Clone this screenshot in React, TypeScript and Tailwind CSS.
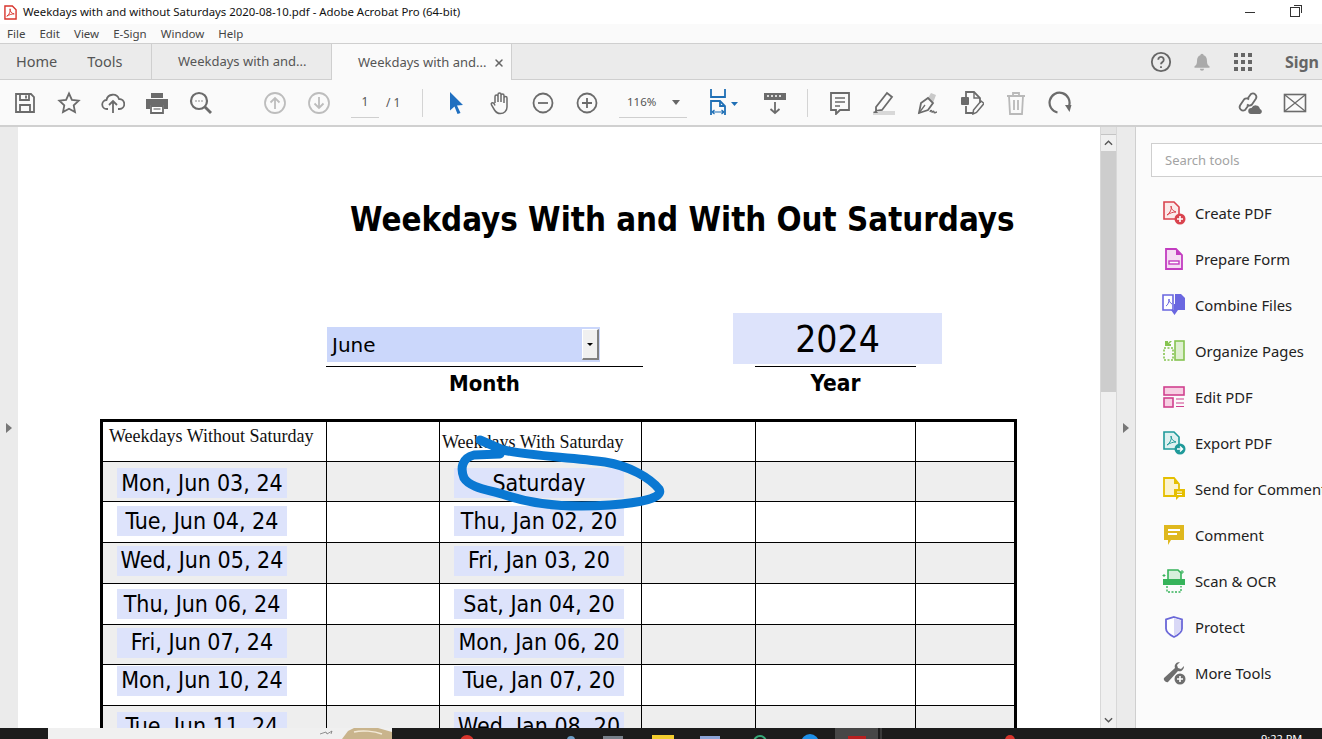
import React from 'react';
import { X } from 'lucide-react';

const UI = "font-['Noto_Sans',sans-serif]";
const DOC = "font-['DejaVu_Sans_Condensed','DejaVu_Sans',sans-serif]";

const ROWS = [
  { a: 'Mon, Jun 03, 24', b: 'Saturday', gray: true, h: 'h-[40px]', nudge: 'pt-[3px]' },
  { a: 'Tue, Jun 04, 24', b: 'Thu, Jan 02, 20', gray: false, h: 'h-[41px]', nudge: 'pb-[2px]' },
  { a: 'Wed, Jun 05, 24', b: 'Fri, Jan 03, 20', gray: true, h: 'h-[41px]', nudge: 'pb-[5px]' },
  { a: 'Thu, Jun 06, 24', b: 'Sat, Jan 04, 20', gray: false, h: 'h-[41px]', nudge: '' },
  { a: 'Fri, Jun 07, 24', b: 'Mon, Jan 06, 20', gray: true, h: 'h-[40px]', nudge: 'pb-[4px]' },
  { a: 'Mon, Jun 10, 24', b: 'Tue, Jan 07, 20', gray: false, h: 'h-[41px]', nudge: 'pb-[9px]' },
  { a: 'Tue, Jun 11, 24', b: 'Wed, Jan 08, 20', gray: true, h: 'h-[40px]', nudge: 'pt-[2px]' },
];

const TOOLS: { label: string; icon: React.ReactNode }[] = [
  {
    label: 'Create PDF',
    icon: (
      <svg viewBox="0 0 24 24" className="w-6 h-6">
        <path d="M2 1h10l5 5v12H2z" fill="#fbeaea" stroke="#d9434e" strokeWidth="1.600" />
        <path d="M5 14c3-2 5-6 4-9 0 3 2 5 5 6-3 0-6 1-9 3z" fill="none" stroke="#d9434e" strokeWidth="1" />
        <circle cx="18" cy="18" r="5.500" fill="#d9434e" />
        <path d="M15 18h6M18 15v6" stroke="#fff" strokeWidth="1.600" />
      </svg>
    ),
  },
  {
    label: 'Prepare Form',
    icon: (
      <svg viewBox="0 0 24 24" className="w-6 h-6">
        <path d="M4 2h10l6 6v14H4z" fill="#f5dcf3" stroke="#c23cc0" strokeWidth="1.800" />
        <path d="M14 2v6h6z" fill="#c23cc0" />
        <rect x="7" y="14" width="10" height="3" fill="#fff" stroke="#c23cc0" strokeWidth="1.400" />
      </svg>
    ),
  },
  {
    label: 'Combine Files',
    icon: (
      <svg viewBox="0 0 24 24" className="w-6 h-6">
        <path d="M1 2h10v15H1z" fill="#fff" stroke="#6a67e0" strokeWidth="1.600" />
        <path d="M13 1h6l4 4v12H13z" fill="#6a67e0" />
        <path d="M4 13c2-1 3-4 3-7 0 2 1 4 3 5" fill="none" stroke="#6a67e0" strokeWidth="1" />
        <path d="M9 17h3v-6h1v6h3l-3.500 5z" fill="#6a67e0" />
      </svg>
    ),
  },
  {
    label: 'Organize Pages',
    icon: (
      <svg viewBox="0 0 24 24" className="w-6 h-6">
        <rect x="13" y="2" width="9" height="19" fill="#dff0d0" stroke="#85c450" strokeWidth="1.600" />
        <rect x="2" y="9" width="9" height="12" fill="none" stroke="#85c450" strokeWidth="1.600" strokeDasharray="2 1.500" />
        <path d="M3 2v5h6V5H7l3-3H8L6 4V2z" fill="#85c450" />
      </svg>
    ),
  },
  {
    label: 'Edit PDF',
    icon: (
      <svg viewBox="0 0 24 24" className="w-6 h-6">
        <rect x="2" y="2" width="20" height="8" fill="#f7cfe3" stroke="#d0408e" strokeWidth="1.600" />
        <rect x="2" y="13" width="9" height="9" fill="#f7cfe3" stroke="#d0408e" strokeWidth="1.600" />
        <path d="M14 14h8M14 18h8M14 21.500h8" stroke="#d0408e" strokeWidth="1.200" />
      </svg>
    ),
  },
  {
    label: 'Export PDF',
    icon: (
      <svg viewBox="0 0 24 24" className="w-6 h-6">
        <path d="M2 1h10l5 5v12H2z" fill="#dff1f0" stroke="#1f9a9a" strokeWidth="1.600" />
        <path d="M5 14c3-2 5-6 4-9 0 3 2 5 5 6-3 0-6 1-9 3z" fill="none" stroke="#1f9a9a" strokeWidth="1" />
        <circle cx="18" cy="18" r="5.500" fill="#1f9a9a" />
        <path d="M15 18h5M18 15.500l2.500 2.500-2.500 2.500" stroke="#fff" strokeWidth="1.400" fill="none" />
      </svg>
    ),
  },
  {
    label: 'Send for Comments',
    icon: (
      <svg viewBox="0 0 24 24" className="w-6 h-6">
        <path d="M2 1h10l5 6v12H2z" fill="#fbf3cf" stroke="#e5bf00" strokeWidth="1.800" />
        <path d="M12 1v6h5z" fill="#e5bf00" />
        <path d="M12 12h11v8h-6l-3 3v-3h-2z" fill="#e5bf00" />
        <path d="M15 15h5M15 17.500h5" stroke="#fff" strokeWidth="1" />
      </svg>
    ),
  },
  {
    label: 'Comment',
    icon: (
      <svg viewBox="0 0 24 24" className="w-6 h-6">
        <path d="M2 2h20v15H9l-3 5v-5H2z" fill="#dfb81e" />
        <path d="M6 7h12M6 11h9" stroke="#fff" strokeWidth="1.800" />
      </svg>
    ),
  },
  {
    label: 'Scan & OCR',
    icon: (
      <svg viewBox="0 0 24 24" className="w-6 h-6">
        <path d="M6 1h10l3 3v7H6z" fill="#d5f0dc" stroke="#36b35a" strokeWidth="1.600" />
        <path d="M1 10h22v6H1z" fill="#36b35a" />
        <path d="M5 17v6h14v-6" fill="none" stroke="#36b35a" strokeWidth="1.400" strokeDasharray="2 1.500" />
        <path d="M20 1v4M18 3h4M2 5v3M.5 6.500h3" stroke="#36b35a" strokeWidth="1" />
      </svg>
    ),
  },
  {
    label: 'Protect',
    icon: (
      <svg viewBox="0 0 24 24" className="w-6 h-6">
        <path d="M12 2l8 2.500v9c0 4-4 6.500-8 8.500-4-2-8-4.500-8-8.500v-9z" fill="#fff" stroke="#6a67d8" strokeWidth="1.800" />
        <path d="M12 3v18c3.500-2 7-4 7-7.500v-8z" fill="#d9d8f6" />
      </svg>
    ),
  },
  {
    label: 'More Tools',
    icon: (
      <svg viewBox="0 0 24 24" className="w-6 h-6">
        <path d="M2 17L13 7c-1-3 1-6 5-6l-3 3 1 3 3 1 3-3c0 4-3 6-6 5L6 21c-2 1-5-2-4-4z" fill="#6e6e6e" />
        <circle cx="18" cy="18" r="5.500" fill="#6e6e6e" />
        <path d="M15 18h6M18 15v6" stroke="#fff" strokeWidth="1.600" />
      </svg>
    ),
  },
];

function Slot({ w = 'w-[44px]', children }: { w?: string; children: React.ReactNode }) {
  return <div className={`${w} h-full flex items-center justify-center shrink-0`}>{children}</div>;
}

function Ico({ children, className = 'text-[#6b6b6b]' }: { children: React.ReactNode; className?: string }) {
  return (
    <svg viewBox="0 0 24 24" className={`w-6 h-6 ${className}`} fill="none" stroke="currentColor" strokeWidth="1.800">
      {children}
    </svg>
  );
}

function Field({ text }: { text: string }) {
  return (
    <div className={`${DOC} w-[170px] h-[30px] bg-[#dde3fb] flex items-center justify-center text-[23px] text-black whitespace-nowrap`}>
      {text}
    </div>
  );
}

function Toolbar() {
  return (
    <div className="h-[47px] bg-[#fafafa] border-b-2 border-[#d0d0d0] flex items-center pl-[3px] shrink-0">
      <Slot>
        <Ico>
          <path d="M3 3h15l3 3v15H3z" />
          <path d="M7 3v6h9V3M7 21v-7h10v7M13 4.500v3" />
        </Ico>
      </Slot>
      <Slot>
        <Ico>
          <path d="M12 2.500l2.900 6.300 6.800.8-5 4.700 1.300 6.800-6-3.400-6 3.400 1.300-6.800-5-4.700 6.800-.8z" />
        </Ico>
      </Slot>
      <Slot>
        <Ico>
          <path d="M7 18H6a4.500 4.500 0 0 1-.5-9A6.500 6.500 0 0 1 18 8a5 5 0 0 1 .5 10H17" />
          <path d="M12 22v-11M8 14l4-4 4 4" />
        </Ico>
      </Slot>
      <Slot>
        <svg viewBox="0 0 24 24" className="w-6 h-6">
          <path d="M6 2h12v5H6z" fill="#6b6b6b" />
          <path d="M1 8h22v10h-4v-4H5v4H1z" fill="#6b6b6b" />
          <path d="M6 15h12v7H6z" fill="#fff" stroke="#6b6b6b" strokeWidth="1.800" />
          <path d="M8.500 18h7" stroke="#6b6b6b" strokeWidth="1.200" />
        </svg>
      </Slot>
      <Slot>
        <Ico>
          <circle cx="10" cy="10" r="8" strokeWidth="2.200" />
          <path d="M16 16l6 6" strokeWidth="2.800" />
          <path d="M6.500 10h1M9.500 10h1M12.500 10h1" strokeWidth="1.600" />
        </Ico>
      </Slot>
      <div className="w-[30px] shrink-0" />
      <Slot>
        <Ico className="text-[#bdbdbd]">
          <circle cx="12" cy="12" r="10" />
          <path d="M12 18V7M7.500 11.500L12 7l4.500 4.500" />
        </Ico>
      </Slot>
      <Slot>
        <Ico className="text-[#bdbdbd]">
          <circle cx="12" cy="12" r="10" />
          <path d="M12 6v11M7.500 12.500L12 17l4.500-4.500" />
        </Ico>
      </Slot>
      <div className="w-[10px] shrink-0" />
      <div className={`${UI} w-[28px] h-[30px] border-b border-[#cfcfcf] flex items-center justify-center text-[12px] text-[#555] shrink-0`}>1</div>
      <div className={`${UI} ml-[7px] w-[15px] text-[12px] text-[#555] shrink-0 whitespace-nowrap`}>/ 1</div>
      <div className="ml-[21px] w-px h-[28px] bg-[#d4d4d4] shrink-0" />
      <div className="w-[11px] shrink-0" />
      <Slot>
        <svg viewBox="0 0 24 24" className="w-6 h-6">
          <path d="M6 1l13 13-6 .5 3.500 7.500-3 1-3-7.500-4.500 4z" fill="#1f6fc0" />
        </svg>
      </Slot>
      <Slot w="w-[43px]">
        <Ico>
          <path d="M7 12V5.500a1.500 1.500 0 0 1 3 0V11M10 10V3.500a1.500 1.500 0 0 1 3 0V11M13 11V4.500a1.500 1.500 0 0 1 3 0V12M16 12V7a1.500 1.500 0 0 1 3 0v9c0 4-3 6.500-6.500 6.500-3 0-4.500-1-6-3.500l-3-5c-1-2 1-3 2.500-1.500L7 14.500" strokeWidth="1.500" />
        </Ico>
      </Slot>
      <Slot>
        <Ico>
          <circle cx="12" cy="12" r="9.500" />
          <path d="M7 12h10" />
        </Ico>
      </Slot>
      <Slot>
        <Ico>
          <circle cx="12" cy="12" r="9.500" />
          <path d="M7 12h10M12 7v10" />
        </Ico>
      </Slot>
      <div className="w-[10px] shrink-0" />
      <div className={`${UI} w-[68px] h-[30px] border-b border-[#cfcfcf] flex items-center justify-between pl-[8px] pr-[7px] text-[11.500px] text-[#555] shrink-0`}>
        <span>116%</span>
        <span className="w-0 h-0 border-x-[4px] border-x-transparent border-t-[5px] border-t-[#666]" />
      </div>
      <div className="w-[16px] shrink-0" />
      <Slot w="w-[40px]">
        <svg viewBox="0 0 30 30" className="w-[30px] h-[30px]" fill="none" stroke="#1f6fb5" strokeWidth="1.800">
          <path d="M3 1v8h14V1" />
          <path d="M3 27V13h9l5 5v9" />
          <path d="M12 13v5h5" />
          <path d="M4 24h12M4 24l2.500-2M4 24l2.500 2M16 24l-2.500-2M16 24l-2.500 2" strokeWidth="1.200" />
          <path d="M23 14h7l-3.500 4z" fill="#1f6fb5" stroke="none" />
        </svg>
      </Slot>
      <div className="w-[10px] shrink-0" />
      <Slot w="w-[44px]">
        <svg viewBox="0 0 24 24" className="w-6 h-6" fill="none">
          <path d="M1 2h22v7H1z" fill="#6b6b6b" />
          <path d="M4 5h2M8 5h2M12 5h2M16 5h2" stroke="#fff" strokeWidth="1.600" />
          <path d="M12 11v11M7.500 18l4.500 4 4.500-4" stroke="#6b6b6b" strokeWidth="1.800" />
        </svg>
      </Slot>
      <div className="ml-[10px] w-px h-[28px] bg-[#d4d4d4] shrink-0" />
      <div className="w-[10px] shrink-0" />
      <Slot>
        <Ico>
          <path d="M3 2h18v17h-9l-4 4v-4H3z" />
          <path d="M7 7h10M7 11h10M7 15h5" strokeWidth="1.300" />
        </Ico>
      </Slot>
      <Slot>
        <svg viewBox="0 0 24 24" className="w-6 h-6" fill="none">
          <path d="M4 16L15 2l5 4-10 13-6 1z" stroke="#6b6b6b" strokeWidth="1.800" />
          <path d="M1 20h22v4H1z" fill="#d8d8d8" />
          <path d="M4 19l-3 3h5z" fill="#6b6b6b" />
        </svg>
      </Slot>
      <Slot>
        <svg viewBox="0 0 24 24" className="w-6 h-6" fill="none">
          <path d="M12 7l3-5 5 2-3 8z" fill="#c9c9c9" />
          <path d="M3 22l2-10 7-5 5 5-5 7z" stroke="#6b6b6b" strokeWidth="1.800" />
          <path d="M3 22l6-8" stroke="#6b6b6b" strokeWidth="1.300" />
          <path d="M14 21c1-3 2-1 2 0s2-2 2 0 2 0 3 0" stroke="#6b6b6b" strokeWidth="1.400" />
        </svg>
      </Slot>
      <Slot>
        <svg viewBox="0 0 24 24" className="w-6 h-6" fill="none">
          <path d="M6 6V1h8l6 6v5M6 15v7h7" stroke="#6b6b6b" strokeWidth="1.800" />
          <path d="M14 1v6h6" stroke="#6b6b6b" strokeWidth="1.400" />
          <rect x="1" y="6" width="8" height="8" rx="1" fill="#6b6b6b" />
          <path d="M13 23l.5-4L21 10l3 2.500-7.500 9z" stroke="#6b6b6b" strokeWidth="1.500" />
        </svg>
      </Slot>
      <Slot>
        <Ico className="text-[#b9b9b9]">
          <path d="M3 5h18M9 5V2h6v3M5 5l1 18h12l1-18M10 9v10M14 9v10" />
        </Ico>
      </Slot>
      <Slot>
        <Ico>
          <path d="M9.500 21.500A10 10 0 1 1 21 15" strokeWidth="2.200" />
          <path d="M17 14h6.500l-2 7z" fill="currentColor" stroke="none" />
        </Ico>
      </Slot>
      <div className="flex-1" />
      <Slot>
        <svg viewBox="0 0 26 26" className="w-[26px] h-[26px]" fill="none">
          <path d="M11 16l-3 4a3.500 3.500 0 0 1-5-4.500l4-6a3.500 3.500 0 0 1 5 0M11 8l3-4a3.500 3.500 0 0 1 5 4.500l-4 6a3.500 3.500 0 0 1-5 0" stroke="#6b6b6b" strokeWidth="1.800" />
          <path d="M14 24a3 3 0 0 1 .5-6 4.500 4.500 0 0 1 8.500 1 2.600 2.600 0 0 1 0 5z" fill="#6b6b6b" />
        </svg>
      </Slot>
      <Slot w="w-[46px]">
        <Ico>
          <rect x="1.500" y="3.500" width="21" height="17" strokeWidth="1.600" />
          <path d="M2 4l20 16M22 4L2 20" strokeWidth="1.300" />
        </Ico>
      </Slot>
      <div className="w-[4px] shrink-0" />
    </div>
  );
}

function DataTable() {
  return (
    <div className="ml-[82px] w-[917px] border-x-[3px] border-t-[3px] border-black">
      <div className="flex h-[40px] border-b border-black font-['Liberation_Serif',serif] text-[18px] text-[#111]">
        <div className="w-[224px] border-r border-black pl-[6px] pt-[1px] whitespace-nowrap">Weekdays Without Saturday</div>
        <div className="w-[113px] border-r border-black" />
        <div className="w-[202px] border-r border-black pl-[2px] pt-[7px] whitespace-nowrap">Weekdays With Saturday</div>
        <div className="w-[114px] border-r border-black" />
        <div className="w-[160px] border-r border-black" />
        <div className="flex-1" />
      </div>
      {ROWS.map((r, i) => (
        <div key={i} className={`flex ${r.h} border-b border-black ${r.gray ? 'bg-[#eeeeee]' : 'bg-white'}`}>
          <div className={`w-[224px] border-r border-black pl-[14px] flex items-center ${r.nudge}`}>
            <Field text={r.a} />
          </div>
          <div className="w-[113px] border-r border-black" />
          <div className={`w-[202px] border-r border-black pl-[14px] flex items-center ${r.nudge}`}>
            <Field text={r.b} />
          </div>
          <div className="w-[114px] border-r border-black" />
          <div className="w-[160px] border-r border-black" />
          <div className="flex-1" />
        </div>
      ))}
    </div>
  );
}

function PdfPage() {
  return (
    <div className="relative w-[1082px] shrink-0 bg-white overflow-hidden">
      <h1 className={`${DOC} mt-[72px] ml-[332px] h-[44px] flex items-center text-[32.800px] font-bold text-black whitespace-nowrap`}>
        Weekdays With and With Out Saturdays
      </h1>
      <div className="flex mt-[70px] ml-[308px]">
        <div className="w-[317px] mt-[14px]">
          <div className="h-[40px] border-b border-black pb-[4px]">
            <div className="ml-px w-[273px] h-[35px] bg-[#cbd7fb] flex items-center justify-between pl-[5px] pr-[1px]">
              <span className="font-['DejaVu_Sans',sans-serif] text-[20px] text-black">June</span>
              <span className="w-[17px] h-[31px] bg-[#f0f0f0] border-r-2 border-b-2 border-[#808080] border-l border-t border-l-white border-t-white flex items-center justify-center">
                <span className="w-0 h-0 border-x-[3px] border-x-transparent border-t-[3px] border-t-black" />
              </span>
            </div>
          </div>
          <div className={`${DOC} text-center text-[22px] font-bold text-black h-[33px] leading-[33px]`}>Month</div>
        </div>
        <div className="w-[209px] ml-[90px]">
          <div className={`${DOC} h-[51px] pt-[3px] bg-[#dde3fb] flex items-center justify-center text-[37px] text-black`}>2024</div>
          <div className="mt-[2px] ml-[22px] w-[161px] h-px bg-black" />
          <div className={`${DOC} ml-[22px] w-[161px] text-center text-[22.500px] font-bold text-black h-[33px] leading-[33px]`}>Year</div>
        </div>
      </div>
      <div className="mt-[19px]">
        <DataTable />
      </div>
      {/* ink scribble over the table */}
      <svg className="absolute left-0 top-0 w-full h-full pointer-events-none" viewBox="0 0 1082 601" fill="none">
        <path
          d="M462 313 L485 323 C512 329 552 330 587 335 C612 339 632 351 641 362 C646 371 622 376 592 378 C552 381 517 378 487 368 C472 363 452 361 446 351 C442 341 444 331 456 328 L482 327"
          stroke="#0a78d2"
          strokeWidth="9"
          strokeLinecap="round"
          strokeLinejoin="round"
        />
      </svg>
    </div>
  );
}

function Scrollbar() {
  return (
    <div className="w-[17px] shrink-0 bg-[#f0f0f0] border-x border-[#d8d8d8] flex flex-col items-center">
      <div className="w-full h-[8px] bg-[#e4e4e4] border-b border-[#c4c4c4]" />
      <div className="h-[16px] flex items-center justify-center text-[#555]">
        <svg viewBox="0 0 10 6" className="w-[9px] h-[6px]" fill="none" stroke="currentColor" strokeWidth="1.500">
          <path d="M1 5l4-4 4 4" />
        </svg>
      </div>
      <div className="w-full h-[241px] bg-[#cdcdcd]" />
      <div className="flex-1" />
      <div className="h-[17px] flex items-center justify-center text-[#555]">
        <svg viewBox="0 0 10 6" className="w-[9px] h-[6px]" fill="none" stroke="currentColor" strokeWidth="1.500">
          <path d="M1 1l4 4 4-4" />
        </svg>
      </div>
    </div>
  );
}

function Gutter({ w }: { w: string }) {
  return (
    <div className={`${w} shrink-0 bg-[#ebebeb] flex items-center justify-center`}>
      <span className="w-0 h-0 border-y-[5px] border-y-transparent border-l-[6px] border-l-[#777]" />
    </div>
  );
}

function ToolsPanel() {
  return (
    <div className={`${UI} flex-1 min-w-0 border-l border-[#cfcfcf] bg-[#fbfbfb] overflow-hidden pt-[16px] pl-[15px]`}>
      <div className="w-[200px] h-[34px] bg-white border border-[#cfcfcf] flex items-center pl-[13px] pt-[1px] text-[13px] text-[#a3a3a3]">Search tools</div>
      <div className="mt-[13px] pl-[11px] flex flex-col">
        {TOOLS.map(t => (
          <div key={t.label} className="w-[200px] h-[46px] flex items-center gap-[9px] whitespace-nowrap text-[14.800px] text-[#222]">
            <span className="w-6 h-6 shrink-0">{t.icon}</span>
            <span>{t.label}</span>
          </div>
        ))}
      </div>
    </div>
  );
}

function Taskbar() {
  return (
    <div className="h-[11px] bg-[#1c1c1c] flex shrink-0 overflow-hidden relative">
      <div className="ml-[48px] w-[344px] bg-[#f0f0f0] flex justify-end">
        <svg viewBox="0 0 72 11" className="w-[72px] h-[11px]">
          <path d="M0 6l6-2 1 2 5-3-1 3" fill="none" stroke="#777" strokeWidth=".8" />
          <path d="M22 11l6-8 6-3h24l14 4v7z" fill="#c9b48c" />
          <path d="M34 4c8-2 20-1 28 2" fill="none" stroke="#f3ead8" strokeWidth="1.500" />
        </svg>
      </div>
      <div className="ml-[68px] mt-[7px] w-[14px] h-[14px] rounded-full bg-[#d8342c]" />
      <div className="ml-[93px] mt-[8px] w-[8px] h-[8px] rounded-full bg-[#6b9cc4]" />
      <div className="ml-[28px] mt-[8px] w-[20px] h-[8px] bg-[#77808a]" />
      <div className="ml-[29px] mt-[7px] w-[22px] h-[8px] bg-[#f2cc2e]" />
      <div className="ml-[26px] mt-[8px] w-[20px] h-[8px] bg-[#8ca4d8]" />
      <div className="ml-[33px] mt-[7px] w-[14px] h-[14px] rounded-full border-2 border-[#35a878]" />
      <div className="ml-[34px] mt-[6px] w-[18px] h-[18px] rounded-full bg-[#1e8fe8]" />
      <div className="ml-[16px] w-[43px] bg-[#474747] flex justify-center pt-[8px]">
        <div className="w-[18px] h-[8px] bg-[#b81f1f]" />
      </div>
      <div className="ml-[2px] w-[2px] bg-[#3a3a3a]" />
      <div className="ml-[123px] mt-[7px] w-[10px] h-[10px] rounded-full bg-[#d8342c]" />
      <div className={`${UI} ml-[246px] text-[11px] leading-[14px] pt-[4px] text-white whitespace-nowrap`}>9:22 PM</div>
    </div>
  );
}

export default function App() {
  return (
    <div className="w-[1322px] h-[739px] overflow-hidden flex flex-col bg-white">
      {/* title bar */}
      <div className={`${UI} h-[24px] bg-white flex items-center shrink-0 text-[11.400px] text-[#111]`}>
        <svg viewBox="0 0 14 16" className="ml-[4px] w-[13px] h-[15px]" fill="none">
          <path d="M1 1h8l4 4v10H1z" fill="#fff" stroke="#d8342c" strokeWidth="1.500" />
          <path d="M3 12c3-2 4-5 3.500-8 0 3 1.500 5 4.500 5.500-3 0-5.500 1-8 2.500z" stroke="#d8342c" strokeWidth="1" />
        </svg>
        <span className="ml-[6px] whitespace-nowrap">Weekdays with and without Saturdays 2020-08-10.pdf - Adobe Acrobat Pro (64-bit)</span>
        <div className="flex-1" />
        <div className="w-[10px] h-px bg-[#333] mr-[35px]" />
        <div className="relative w-[10px] h-[10px] border border-[#333] mr-[22px]">
          <div className="absolute -top-[3px] -right-[3px] w-[8px] h-[8px] border-t border-r border-[#333]" />
        </div>
      </div>
      {/* menu bar */}
      <div className={`${UI} h-[19px] bg-[#fafafa] flex items-center pl-[7px] gap-[14px] shrink-0 text-[11.500px] text-[#444]`}>
        <span>File</span>
        <span>Edit</span>
        <span>View</span>
        <span>E-Sign</span>
        <span>Window</span>
        <span>Help</span>
      </div>
      {/* tabs */}
      <div className={`${UI} h-[37px] bg-[#ebebeb] border-y border-[#cfcfcf] flex shrink-0 text-[#555]`}>
        <div className="w-[152px] flex items-center pl-[16px] gap-[30px] text-[14.500px] border-r border-[#cfcfcf]">
          <span>Home</span>
          <span>Tools</span>
        </div>
        <div className="w-[179px] flex items-center pl-[26px] text-[13px] whitespace-nowrap">Weekdays with and...</div>
        <div className="w-[181px] h-[37px] bg-[#fafafa] border-x border-[#cfcfcf] flex items-center pl-[26px] text-[13px] whitespace-nowrap">
          <span>Weekdays with and...</span>
          <X size={12} strokeWidth={3} className="ml-[7px] text-[#666]" />
        </div>
        <div className="flex-1" />
        <div className="flex items-center mr-[3px]">
          <svg viewBox="0 0 24 24" className="w-[22px] h-[22px]" fill="none" stroke="#666" strokeWidth="2">
            <circle cx="12" cy="12" r="10" />
            <path d="M9 9.500a3 3 0 1 1 4.500 2.600c-1 .6-1.500 1.200-1.500 2.400M12 16.500v2" />
          </svg>
          <svg viewBox="0 0 24 24" className="ml-[20px] w-[20px] h-[20px]" fill="#aaa">
            <path d="M12 2a2 2 0 0 1 2 2c3 1 4 3.500 4 7 0 3 1 5 3 6v2H3v-2c2-1 3-3 3-6 0-3.500 1-6 4-7a2 2 0 0 1 2-2zM9.500 20h5a2.500 2.500 0 0 1-5 0z" />
          </svg>
          <div className="ml-[22px] grid grid-cols-3 gap-[3px]">
            {Array.from({ length: 9 }).map((_, i) => (
              <div key={i} className="w-[4px] h-[4px] bg-[#666]" />
            ))}
          </div>
          <span className="ml-[33px] text-[16px] font-bold text-[#666] whitespace-nowrap">Sign</span>
        </div>
      </div>
      <Toolbar />
      {/* document area */}
      <div className="flex-1 min-h-0 flex">
        <Gutter w="w-[18px]" />
        <PdfPage />
        <Scrollbar />
        <Gutter w="w-[18px]" />
        <ToolsPanel />
      </div>
      <Taskbar />
    </div>
  );
}
